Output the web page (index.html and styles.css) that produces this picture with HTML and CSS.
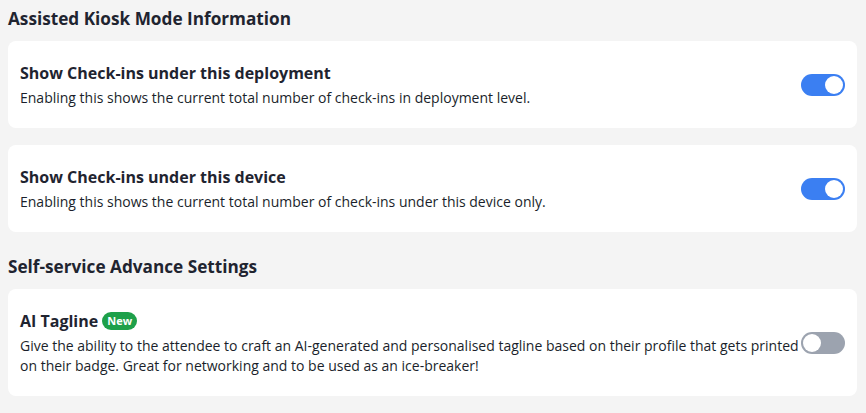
FILE: index.html
```html
<!DOCTYPE html>
<html lang="en">
<head>
<meta charset="utf-8">
<title>Settings</title>
<link rel="stylesheet" href="styles.css">
</head>
<body>
<main class="page">
  <section class="group">
    <h2 class="group-title">Assisted Kiosk Mode Information</h2>
    <div class="card">
      <div class="card-text">
        <h3 class="card-title">Show Check-ins under this deployment</h3>
        <p class="card-desc">Enabling this shows the current total number of check-ins in deployment level.</p>
      </div>
      <span class="toggle on"><span class="knob"></span></span>
    </div>
    <div class="card">
      <div class="card-text">
        <h3 class="card-title">Show Check-ins under this device</h3>
        <p class="card-desc">Enabling this shows the current total number of check-ins under this device only.</p>
      </div>
      <span class="toggle on"><span class="knob"></span></span>
    </div>
  </section>
  <section class="group">
    <h2 class="group-title">Self-service Advance Settings</h2>
    <div class="card">
      <div class="card-text">
        <h3 class="card-title">AI Tagline <span class="badge">New</span></h3>
        <p class="card-desc">Give the ability to the attendee to craft an AI-generated and personalised tagline based on their profile that gets printed on their badge. Great for networking and to be used as an ice-breaker!</p>
      </div>
      <span class="toggle off"><span class="knob"></span></span>
    </div>
  </section>
</main>
</body>
</html>
```
FILE: styles.css
```css
* { box-sizing: border-box; }
html, body { margin: 0; padding: 0; }
body {
  background: #f4f4f4;
  font-family: "Open Sans", "Liberation Sans", sans-serif;
  color: #1f2937;
}
.page {
  padding: 7px 9px 0 8px;
  display: flex;
  flex-direction: column;
  gap: 23px;
}
.group {
  display: flex;
  flex-direction: column;
  gap: 17px;
}
.group-title {
  margin: 0 0 -7px 0;
  font-size: 17.2px;
  line-height: 24px;
  font-weight: 700;
  color: #1f2430;
}
.card {
  background: #ffffff;
  border-radius: 8px;
  padding: 20px 12px 20px 12px;
  display: flex;
  align-items: center;
}
.card-text {
  flex: 1;
  min-width: 0;
}
.card-title {
  margin: 0;
  font-size: 16px;
  line-height: 24px;
  font-weight: 700;
  color: #1f2430;
  display: flex;
  align-items: center;
  gap: 4px;
}
.card-desc {
  margin: 3px 0 0 0;
  font-size: 14px;
  line-height: 20px;
  color: #1a1f2b;
}
.badge {
  display: inline-block;
  background: #1ea04a;
  color: #ffffff;
  font-size: 11px;
  line-height: 18px;
  font-weight: 700;
  padding: 0 5px;
  border-radius: 9px;
}
.toggle {
  flex: 0 0 auto;
  width: 44px;
  height: 22px;
  border-radius: 11px;
  padding: 2px;
  display: flex;
}
.toggle.on { background: #3b7ff2; justify-content: flex-end; }
.toggle.off { background: #9ca3af; justify-content: flex-start; }
.knob {
  width: 18px;
  height: 18px;
  border-radius: 50%;
  background: #ffffff;
}
```
